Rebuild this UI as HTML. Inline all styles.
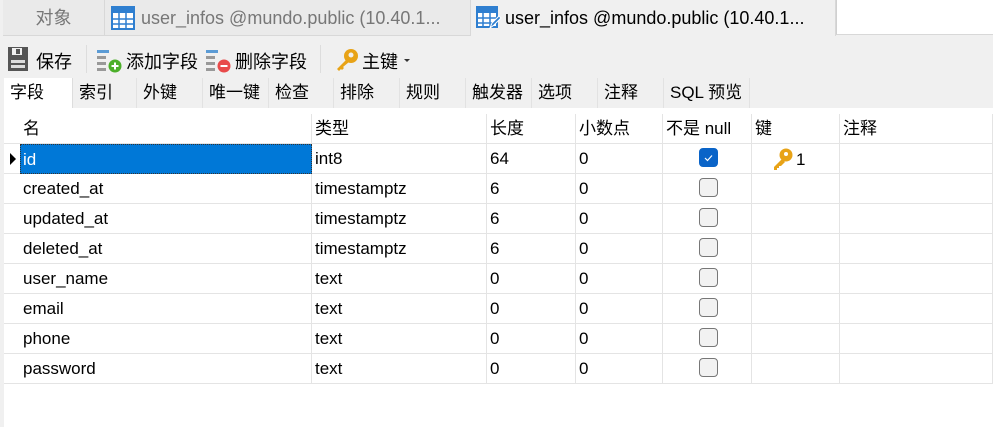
<!DOCTYPE html>
<html><head><meta charset="utf-8"><style>
*{margin:0;padding:0;box-sizing:border-box}
body{width:993px;height:427px;background:#f0f0f0;font-family:"Liberation Sans","Noto Sans CJK SC",sans-serif;font-size:17px;color:#000;position:relative;overflow:hidden}
.a{position:absolute;white-space:nowrap}
.tab{position:absolute;top:0;height:36px;line-height:36px;color:#777;background:#eaeaea;border-right:1px solid #d8d8d8;border-bottom:1px solid #d8d8d8;font-size:18px}
.st{position:absolute;top:78px;height:30px;line-height:30px;background:#f0f0f0;border-right:1px solid #e2e2e2;padding-left:6px;font-size:17px}
.grid{position:absolute;left:4px;top:108px;width:989px;height:319px;background:#fff}
.c{position:absolute;top:0;height:30px;line-height:29px;padding-left:3px;border-right:1px solid #e4e4e4}
.cb{position:absolute;width:19px;height:19px;border:1px solid #777;border-radius:4px;background:#f2f2f2}
</style></head><body>
<div class="tab" style="left:3px;width:102px;text-align:center">对象</div>
<div class="tab" style="left:105px;width:366px"><svg class="a" style="left:6px;top:6px" width="24" height="24"><rect x="1" y="1" width="22" height="22" fill="#fff" stroke="#2f7fd0" stroke-width="2"/><rect x="1" y="1" width="22" height="6" fill="#2f7fd0"/><path d="M1 13H23M1 18H23M8 7V23M15 7V23" stroke="#2f7fd0" stroke-width="1.5"/></svg><span class="a" style="left:36px;top:0">user_infos @mundo.public (10.40.1...</span></div>
<div class="tab" style="left:471px;width:365px;background:#f0f0f0;color:#000;border-bottom:none"><svg class="a" style="left:5px;top:6px" width="26" height="24"><rect x="1" y="1" width="20" height="20" fill="#fff" stroke="#2f7fd0" stroke-width="2"/><rect x="1" y="1" width="20" height="6" fill="#2f7fd0"/><path d="M1 12H21M1 17H21M7 7V21M14 7V21" stroke="#2f7fd0" stroke-width="1.5"/><path d="M14 22L16 17L23 10L25 12L18 19Z" fill="#2f7fd0" stroke="#fff"/></svg><span class="a" style="left:34px;top:0">user_infos @mundo.public (10.40.1...</span></div>
<div class="a" style="left:836px;top:0;width:157px;height:35px;background:#fff;border-left:1px solid #d0d0d0;border-bottom:1px solid #d8d8d8"></div>

<svg class="a" style="left:8px;top:47px" width="20" height="24"><rect x="0" y="0" width="20" height="24" fill="#555"/><rect x="4" y="1" width="10" height="7" fill="#f0f0f0"/><rect x="8" y="2" width="4" height="5" fill="#555"/><rect x="3" y="13" width="14" height="3" fill="#ddd"/><rect x="3" y="18" width="14" height="3" fill="#ddd"/></svg>
<span class="a" style="left:36px;top:48px;font-size:18px">保存</span>
<div class="a" style="left:86px;top:45px;width:1px;height:28px;background:#ddd"></div>
<svg class="a" style="left:97px;top:49px" width="26" height="24"><rect x="0" y="1" width="12" height="3" fill="#5b9bd5"/><rect x="0" y="7" width="9" height="3" fill="#999"/><rect x="0" y="13" width="9" height="3" fill="#999"/><rect x="0" y="19" width="9" height="3" fill="#999"/><circle cx="18" cy="17" r="6.5" fill="#4caf2a"/><path d="M14.5 17H21.5M18 13.5V20.5" stroke="#fff" stroke-width="2"/></svg>
<span class="a" style="left:126px;top:48px;font-size:18px">添加字段</span>
<svg class="a" style="left:206px;top:49px" width="26" height="24"><rect x="0" y="1" width="12" height="3" fill="#5b9bd5"/><rect x="0" y="7" width="9" height="3" fill="#999"/><rect x="0" y="13" width="9" height="3" fill="#999"/><rect x="0" y="19" width="9" height="3" fill="#999"/><circle cx="18" cy="17" r="6.5" fill="#e84a4a"/><path d="M14.5 17H21.5" stroke="#fff" stroke-width="2"/></svg>
<span class="a" style="left:235px;top:48px;font-size:18px">删除字段</span>
<div class="a" style="left:320px;top:45px;width:1px;height:28px;background:#ddd"></div>
<svg class="a" style="left:334px;top:48px" width="26" height="24"><circle cx="17" cy="8" r="7" fill="#e8a317"/><circle cx="17" cy="7" r="2.5" fill="#f0f0f0"/><path d="M12 12L3 21L5 23L7 21L8 22L10 20L9 19L15 14Z" fill="#e8a317"/></svg>
<span class="a" style="left:362px;top:48px;font-size:18px">主键</span>
<div class="a" style="left:404px;top:59px;width:0;height:0;border-left:3px solid transparent;border-right:3px solid transparent;border-top:3px solid #333"></div>

<div class="st" style="left:4px;width:69px;background:#fff;height:31px;border-right:1px solid #ddd">字段</div>
<div class="st" style="left:73px;width:64px">索引</div>
<div class="st" style="left:137px;width:66px">外键</div>
<div class="st" style="left:203px;width:66px">唯一键</div>
<div class="st" style="left:269px;width:65px">检查</div>
<div class="st" style="left:334px;width:66px">排除</div>
<div class="st" style="left:400px;width:66px">规则</div>
<div class="st" style="left:466px;width:66px">触发器</div>
<div class="st" style="left:532px;width:66px">选项</div>
<div class="st" style="left:598px;width:66px">注释</div>
<div class="st" style="left:664px;width:86px">SQL 预览</div>

<div class="grid"></div>
<div id="g" class="a" style="left:4px;top:114px;width:989px"></div>
<script>
var cols=[[16,292],[308,175],[483,89],[572,87],[659,89],[748,88],[836,153]];
var hdr=["名","类型","长度","小数点","不是 null","键","注释"];
var rows=[["id","int8","64","0"],["created_at","timestamptz","6","0"],["updated_at","timestamptz","6","0"],["deleted_at","timestamptz","6","0"],["user_name","text","0","0"],["email","text","0","0"],["phone","text","0","0"],["password","text","0","0"]];
var h="";
function row(y,cells,sel){var s='<div class="a" style="left:0;top:'+y+'px;width:989px;height:30px;border-bottom:1px solid #e4e4e4">';
for(var i=0;i<7;i++){var st='left:'+cols[i][0]+'px;width:'+cols[i][1]+'px;';if(sel&&i==0)st+='background:#0078d7;color:#fff;border:1px dotted #333;padding-left:2px;';s+='<div class="c" style="'+st+'">'+(cells[i]||"")+'</div>';}
return s+'</div>';}
h+=row(0,hdr);
for(var r=0;r<rows.length;r++){var y=30+r*30;h+=row(y,rows[r],r==0);
if(r==0){h+='<div class="a" style="left:6px;top:'+(y+9)+'px;width:0;height:0;border-left:6px solid #000;border-top:6px solid transparent;border-bottom:6px solid transparent"></div>';
h+='<div class="cb" style="left:695px;top:'+(y+4)+'px;background:#0a64c8;border-color:#0a64c8"><svg width="17" height="17" style="position:absolute;left:0;top:0"><path d="M5 9L7.5 11.5L12 6.5" stroke="#fff" stroke-width="1.2" fill="none"/></svg></div>';
h+='<svg class="a" style="left:768px;top:'+(y+4)+'px" width="22" height="24"><circle cx="14" cy="7" r="6.5" fill="#e8a317"/><circle cx="14" cy="6" r="2" fill="#fff"/><path d="M10 11L2 19L2 22L5 22L5 20L7 20L7 18L9 18L13 14Z" fill="#e8a317"/></svg><span class="a" style="left:792px;top:'+(y+1)+'px;line-height:29px">1</span>';}
else h+='<div class="cb" style="left:695px;top:'+(y+4)+'px"></div>';}
document.getElementById("g").innerHTML=h;
</script>
</body></html>
